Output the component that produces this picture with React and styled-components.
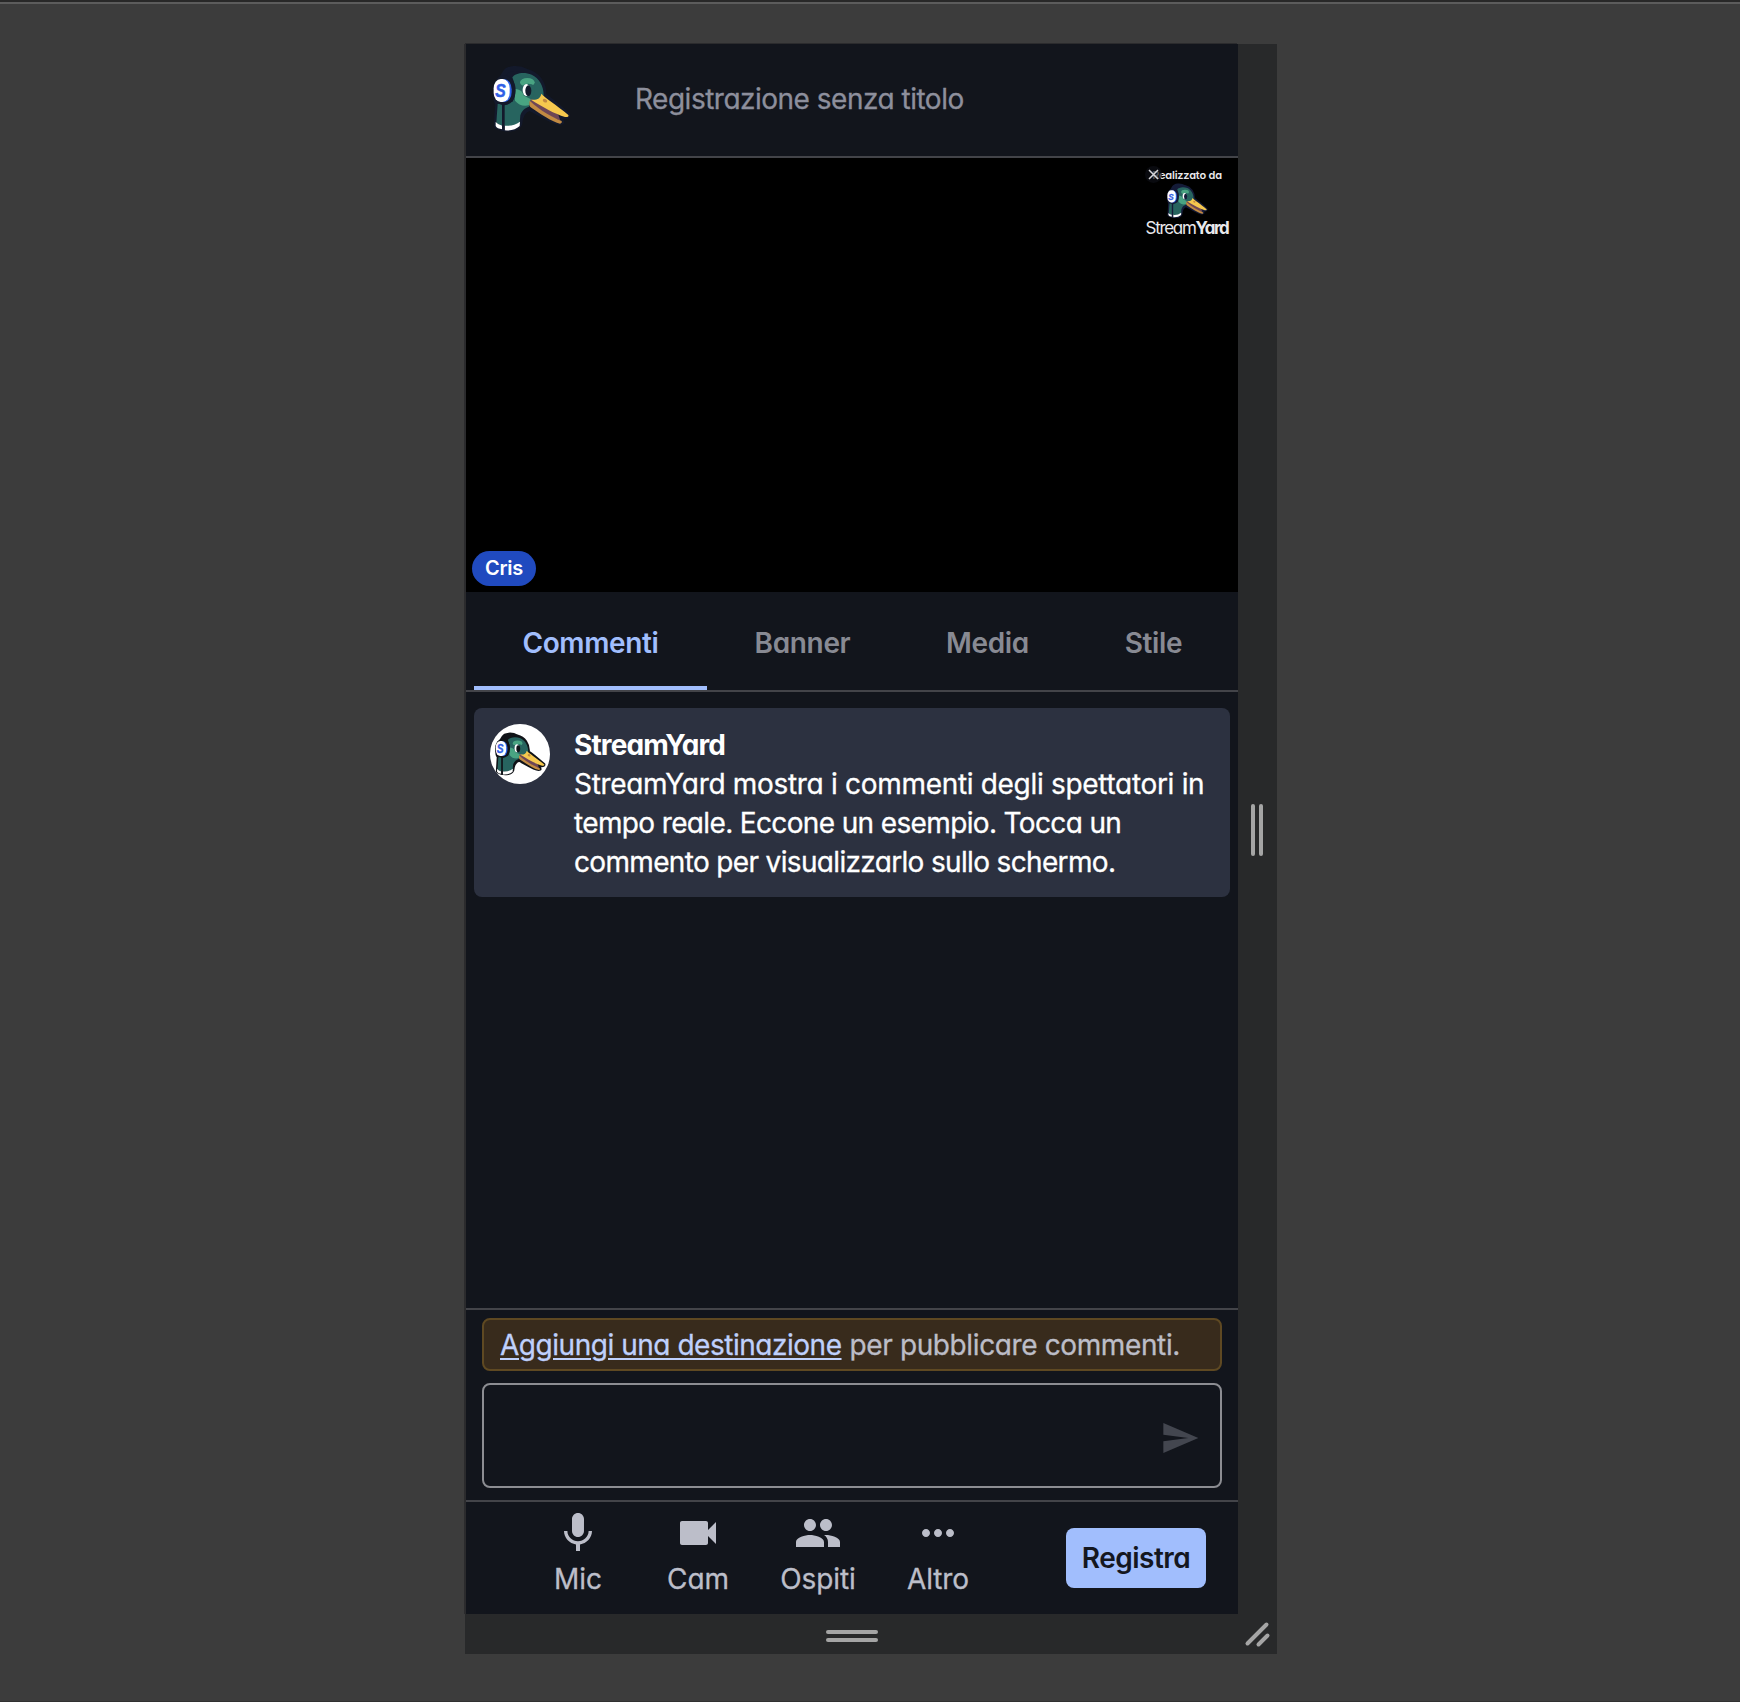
import React from "react";
import styled, { createGlobalStyle, css } from "styled-components";

const color = {
  screen: "#12151c",
  line: "#434449",
  accent: "#a1befd",
  icon: "#bcbec9",
  gutter: "#28292a",
  handle: "#a5a5a5",
};

const GlobalStyle = createGlobalStyle`
  * { box-sizing: border-box; }
  body {
    margin: 0;
    background: #3c3c3c;
    font-family: Inter, "Liberation Sans", sans-serif;
    font-feature-settings: "cv11";
    font-size: 28px;
    line-height: 1.4;
  }
`;

const sturdy = css`
  -webkit-text-stroke: 0.3px currentColor;
`;

const Page = styled.main`
  height: 1702px;
  border-top: 2px solid #282828;
  border-bottom: 1px solid #303030;
  background: #3c3c3c;
  &::before {
    content: "";
    display: block;
    height: 2px;
    background: #5c5c5c;
  }
`;

const Device = styled.div`
  display: grid;
  grid-template-columns: 773px 39px;
  grid-template-rows: 1570px 40px;
  width: 812px;
  margin: 40px 0 0 465px;
  background: ${color.gutter};
`;

const Screen = styled.div`
  display: flex;
  flex-direction: column;
  margin-left: 1px;
  background: ${color.screen};
  box-shadow: -1px -1px 0 #2b2b2d, -2px 0 0 #2b2b2d;
`;

const Handle = styled.div`
  display: flex;
  align-items: center;
  justify-content: center;
  gap: 4px;
  flex-direction: ${(p) => (p.$vertical ? "row" : "column")};
  padding: ${(p) => (p.$vertical ? "2px 1px 0 0" : "4px 0 0 1px")};
  i {
    border-radius: 2px;
    background: ${color.handle};
    width: ${(p) => (p.$vertical ? "4px" : "52px")};
    height: ${(p) => (p.$vertical ? "52px" : "4px")};
  }
  ${(p) => !p.$vertical && css`justify-content: flex-start; padding-top: 16px;`}
`;

const Corner = styled.svg`
  display: block;
  width: 39px;
  height: 40px;
`;

const Header = styled.header`
  display: flex;
  align-items: flex-start;
  gap: 64px;
  height: 114px;
  padding: 21px 0 0 25px;
  border-bottom: 2px solid ${color.line};
`;

const DuckSvg = styled.svg`
  display: block;
  flex: none;
  width: ${(p) => p.$w}px;
  height: ${(p) => p.$w * 0.85}px;
`;

const Title = styled.div`
  ${sturdy}
  margin-top: 15px;
  color: #8d8f9c;
  letter-spacing: -0.5px;
  white-space: nowrap;
`;

const Stage = styled.section`
  display: flex;
  justify-content: space-between;
  height: 434px;
  background: #000;
`;

const NameBadge = styled.div`
  align-self: flex-end;
  display: flex;
  align-items: center;
  justify-content: center;
  width: 64px;
  height: 35px;
  margin: 0 0 6px 6px;
  padding-bottom: 1px;
  border-radius: 18px;
  background: #204abf;
  color: #fff;
  font-size: 20px;
  font-weight: 600;
  letter-spacing: -0.3px;
`;

const Watermark = styled.div`
  position: relative;
  display: flex;
  flex-direction: column;
  align-items: center;
  align-self: flex-start;
  width: 84px;
  margin: 8px 9px 0 0;
  color: #e9e9ec;
`;

const MadeBy = styled.div`
  height: 17px;
  font-size: 11px;
  font-weight: 600;
  line-height: 18px;
  letter-spacing: -0.2px;
  white-space: nowrap;
`;

const CloseMark = styled.svg`
  position: absolute;
  left: 0;
  top: 0;
  width: 17px;
  height: 17px;
`;

const Wordmark = styled.div`
  height: 20px;
  margin-top: -1px;
  font-size: 17px;
  font-weight: 400;
  line-height: 20px;
  letter-spacing: -1.3px;
  white-space: nowrap;
  b { font-weight: 700; letter-spacing: -1.4px; }
`;

const Tabs = styled.nav`
  display: flex;
  height: 100px;
  padding: 0 8px;
  border-bottom: 2px solid ${color.line};
`;

const Tab = styled.div`
  display: flex;
  align-items: center;
  justify-content: center;
  flex: 0 0 ${(p) => p.$w}px;
  padding-top: 9px;
  border-bottom: 4px solid ${(p) => (p.$active ? color.accent : "transparent")};
  color: ${(p) => (p.$active ? color.accent : "#888a93")};
  font-weight: 600;
  letter-spacing: -0.35px;
`;

const Comments = styled.section`
  flex: 1;
  padding: 16px 8px;
`;

const Card = styled.article`
  display: flex;
  gap: 24px;
  height: 189px;
  padding: 16px;
  border-radius: 8px;
  background: #2c3140;
  color: #fff;
`;

const CardBody = styled.div`
  padding-top: 1.5px;
`;

const Avatar = styled.div`
  flex: none;
  width: 60px;
  height: 60px;
  padding: 8px 0 0 4px;
  border-radius: 50%;
  background: #fff;
  overflow: hidden;
`;

const Author = styled.div`
  font-weight: 700;
  letter-spacing: -0.88px;
`;

const Line = styled.div`
  ${sturdy}
  letter-spacing: ${(p) => p.$track}px;
  white-space: nowrap;
`;

const Composer = styled.section`
  display: flex;
  flex-direction: column;
  gap: 12px;
  height: 192px;
  padding: 8px 16px 0;
  border-top: 2px solid ${color.line};
`;

const Notice = styled.div`
  ${sturdy}
  display: flex;
  align-items: center;
  gap: 8px;
  height: 53px;
  padding: 2px 16px 0;
  border: 2px solid #5f4922;
  border-radius: 8px;
  background: #382b1c;
  color: #bcbdc7;
  letter-spacing: -0.38px;
  white-space: nowrap;
`;

const NoticeLink = styled.a`
  color: #bfd0fc;
  letter-spacing: -0.47px;
  text-decoration: underline;
  text-decoration-thickness: 2px;
  text-underline-offset: 3px;
`;

const Input = styled.div`
  display: flex;
  align-items: center;
  justify-content: flex-end;
  height: 105px;
  padding: 4px 20px 0 0;
  border: 2px solid #8c8d92;
  border-radius: 8px;
`;

const Icon = styled.svg`
  display: block;
  width: ${(p) => p.$size}px;
  height: ${(p) => p.$size}px;
  fill: ${(p) => p.$fill || color.icon};
`;

const Toolbar = styled.footer`
  display: flex;
  height: 114px;
  padding: 0 32px 0 52px;
  border-top: 2px solid ${color.line};
`;

const Tool = styled.div`
  ${sturdy}
  display: flex;
  flex-direction: column;
  align-items: center;
  width: 120px;
  padding-top: 7px;
  color: ${color.icon};
  line-height: 45px;
  letter-spacing: -0.1px;
`;

const RecordButton = styled.button`
  width: 140px;
  height: 60px;
  margin: 26px 0 0 auto;
  padding: 2px 0 0;
  border: 0;
  border-radius: 8px;
  background: ${color.accent};
  color: #14171f;
  font: inherit;
  font-weight: 600;
  font-feature-settings: inherit;
  letter-spacing: -0.5px;
`;

const Duck = ({ width, outline = "#13192b" }) => (
  <DuckSvg $w={width} viewBox="108 105 240 204">
    <g fill={outline} stroke={outline} strokeWidth="15" strokeLinejoin="round">
      <path d="M150 128C158 114 190 110 215 124C248 132 268 160 266 196C290 213 312 232 338 255Q338 260 328 260L314 258L320 276Q312 280 292 271C262 257 238 242 224 235C206 240 196 254 194 282C188 300 150 302 124 288L128 222C116 200 118 158 138 148Z" />
    </g>
    <path fill="#27645f" d="M172 142C180 130 206 124 230 134C252 144 266 168 266 195L258 210L230 212L222 230C210 234 200 242 196 256L194 280C172 292 140 291 124 278L128 222L172 216C182 202 184 170 172 142Z" />
    <path fill="#49a482" d="M180 177C198 178 204 188 206 196Q216 203 228 208Q220 222 223 225C206 231 190 224 180 212Z" />
    <ellipse fill="#49a482" cx="217" cy="157" rx="22" ry="13" />
    <path fill="#27645f" d="M199 172C204 160 228 158 238 168C242 180 238 194 232 203L206 196Z" />
    <ellipse fill="#fff" cx="214" cy="180" rx="11" ry="18" />
    <ellipse fill={outline} cx="220" cy="182" rx="9" ry="16" />
    <path fill="#6e4656" d="M228 207C252 216 286 236 310 254L316 272C285 262 250 240 226 216Z" />
    <path fill="#c28a42" d="M224 212C222 222 223 230 229 233C255 251 292 275 315 281Q322 280 320 273C290 260 258 244 224 212Z" />
    <path fill="#f6c84e" d="M259 191C268 202 304 224 340 255Q343 262 330 261C300 252 262 230 228 209C246 211 256 206 259 191Z" />
    <ellipse fill="#c28a42" cx="270" cy="212" rx="7" ry="5" transform="rotate(28 270 212)" />
    <path fill="#fff" d="M122 276Q130 285 142 287V298Q126 296 122 288ZM149 287Q174 290 195 275L194 288Q178 303 149 301Z" />
    <path fill="none" stroke={outline} strokeWidth="8" d="M145 222V302" />
    <ellipse fill={outline} cx="148" cy="181" rx="34" ry="45" />
    <rect fill="#2d62e4" x="124" y="148" width="46" height="68" rx="21" ry="30" />
    <rect fill="#fff" x="116" y="147" width="48" height="69" rx="21" ry="28" />
    <text
      x="0"
      y="0"
      transform="translate(121 201) scale(.84 1)"
      fill="#3060e6"
      stroke="#3060e6"
      strokeWidth="1.500"
      fontFamily="Liberation Sans, sans-serif"
      fontSize="56"
      fontStyle="italic"
      fontWeight="700"
    >
      S
    </text>
  </DuckSvg>
);

const tools = [
  { label: "Mic", d: "M12 14c1.66 0 2.99-1.34 2.99-3L15 5c0-1.66-1.34-3-3-3S9 3.34 9 5v6c0 1.66 1.34 3 3 3zm5.3-3c0 3-2.54 5.1-5.3 5.1S6.7 14 6.7 11H5c0 3.41 2.72 6.23 6 6.72V21h2v-3.28c3.28-.48 6-3.3 6-6.72h-1.7z" },
  { label: "Cam", d: "M17 10.5V7c0-.55-.45-1-1-1H4c-.55 0-1 .45-1 1v10c0 .55.45 1 1 1h12c.55 0 1-.45 1-1v-3.500l4 4v-11l-4 4z" },
  { label: "Ospiti", d: "M16 11c1.66 0 2.99-1.34 2.99-3S17.660 5 16 5c-1.660 0-3 1.340-3 3s1.340 3 3 3zm-8 0c1.660 0 2.990-1.340 2.990-3S9.660 5 8 5C6.340 5 5 6.340 5 8s1.340 3 3 3zm0 2c-2.330 0-7 1.170-7 3.500V19h14v-2.500c0-2.330-4.670-3.500-7-3.500zm8 0c-.29 0-.62.02-.97.05 1.160.84 1.970 1.970 1.970 3.450V19h6v-2.500c0-2.330-4.670-3.500-7-3.500z" },
  { label: "Altro", d: "M6 10c-1.100 0-2 .9-2 2s.9 2 2 2 2-.9 2-2-.9-2-2-2zm12 0c-1.100 0-2 .9-2 2s.9 2 2 2 2-.9 2-2-.9-2-2-2zm-6 0c-1.100 0-2 .9-2 2s.9 2 2 2 2-.9 2-2-.9-2-2-2z" },
];

export default function App() {
  return (
    <>
      <GlobalStyle />
      <Page>
        <Device>
          <Screen>
            <Header>
              <Duck width={80} />
              <Title>Registrazione senza titolo</Title>
            </Header>

            <Stage>
              <NameBadge>Cris</NameBadge>
              <Watermark>
                <MadeBy>Realizzato da</MadeBy>
                <CloseMark viewBox="0 0 17 17">
                  <circle cx="8.500" cy="8.500" r="8.500" fill="#0d0e15" fillOpacity=".7" />
                  <path d="M4 4l9 9M13 4l-9 9" stroke="#d6d6da" strokeWidth="1.500" />
                </CloseMark>
                <Duck width={42} outline="#141b38" />
                <Wordmark>
                  Stream<b>Yard</b>
                </Wordmark>
              </Watermark>
            </Stage>

            <Tabs>
              <Tab $w={233} $active>Commenti</Tab>
              <Tab $w={191}>Banner</Tab>
              <Tab $w={179}>Media</Tab>
              <Tab $w={153}>Stile</Tab>
            </Tabs>

            <Comments>
              <Card>
                <Avatar>
                  <Duck width={52} outline="#101318" />
                </Avatar>
                <CardBody>
                  <Author>StreamYard</Author>
                  <Line $track={-0.31}>StreamYard mostra i commenti degli spettatori in</Line>
                  <Line $track={-0.64}>tempo reale. Eccone un esempio. Tocca un</Line>
                  <Line $track={-0.66}>commento per visualizzarlo sullo schermo.</Line>
                </CardBody>
              </Card>
            </Comments>

            <Composer>
              <Notice>
                <NoticeLink>Aggiungi una destinazione</NoticeLink>
                <span>per pubblicare commenti.</span>
              </Notice>
              <Input>
                <Icon $size={40} $fill="#43464f" viewBox="0 0 24 24">
                  <path d="M2.010 21L23 12 2.010 3 2 10l15 2-15 2z" />
                </Icon>
              </Input>
            </Composer>

            <Toolbar>
              {tools.map((t) => (
                <Tool key={t.label}>
                  <Icon $size={48} viewBox="0 0 24 24">
                    <path d={t.d} />
                  </Icon>
                  {t.label}
                </Tool>
              ))}
              <RecordButton>Registra</RecordButton>
            </Toolbar>
          </Screen>

          <Handle $vertical>
            <i />
            <i />
          </Handle>
          <Handle>
            <i />
            <i />
          </Handle>
          <Corner viewBox="0 0 39 40">
            <path
              d="M9.500 29.500L28.500 10.500M20.500 30.500L29.500 21.500"
              fill="none"
              stroke={color.handle}
              strokeWidth="4"
              strokeLinecap="round"
            />
          </Corner>
        </Device>
      </Page>
    </>
  );
}
